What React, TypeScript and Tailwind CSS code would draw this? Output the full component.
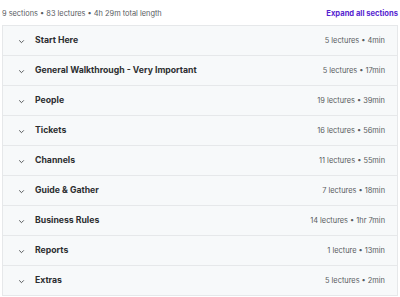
import React from "react";

const sections = [
  { title: "Start Here", meta: "5 lectures • 4min" },
  { title: "General Walkthrough - Very Important", meta: "5 lectures • 17min" },
  { title: "People", meta: "19 lectures • 39min" },
  { title: "Tickets", meta: "16 lectures • 56min" },
  { title: "Channels", meta: "11 lectures • 55min" },
  { title: "Guide & Gather", meta: "7 lectures • 18min" },
  { title: "Business Rules", meta: "14 lectures • 1hr 7min" },
  { title: "Reports", meta: "1 lecture • 13min" },
  { title: "Extras", meta: "5 lectures • 2min" },
];

function Chevron() {
  return (
    <svg width="7" height="7" viewBox="0 0 24 24" fill="none" stroke="#3e4143" strokeWidth="3" strokeLinecap="round" strokeLinejoin="round">
      <path d="M5 9l7 7 7-7" />
    </svg>
  );
}

export default function App() {
  return (
    <div className="w-[400px] h-[297px] bg-white px-[2px] text-[#2d2f31]" style={{ fontFamily: "Inter, 'Noto Sans', sans-serif" }}>
      <div className="h-[25px] pt-[3px] flex items-center justify-between">
        <span className="text-[7.4px] text-[#595c5f]">9 sections • 83 lectures • 4h 29m total length</span>
        <span className="text-[7.6px] font-bold text-[#5624d0]">Expand all sections</span>
      </div>
      <div className="border border-[#e6e8ea] border-b-0">
        {sections.map((s) => (
          <div key={s.title} className="h-[30px] pt-[1px] bg-[#f7f9fa] border-b border-[#e6e8ea] flex items-center pl-[15px] pr-[12px]">
            <Chevron />
            <span className="ml-[10px] text-[8.7px] font-bold">{s.title}</span>
            <span className="ml-auto text-[7.4px] text-[#595c5f]">{s.meta}</span>
          </div>
        ))}
      </div>
    </div>
  );
}
